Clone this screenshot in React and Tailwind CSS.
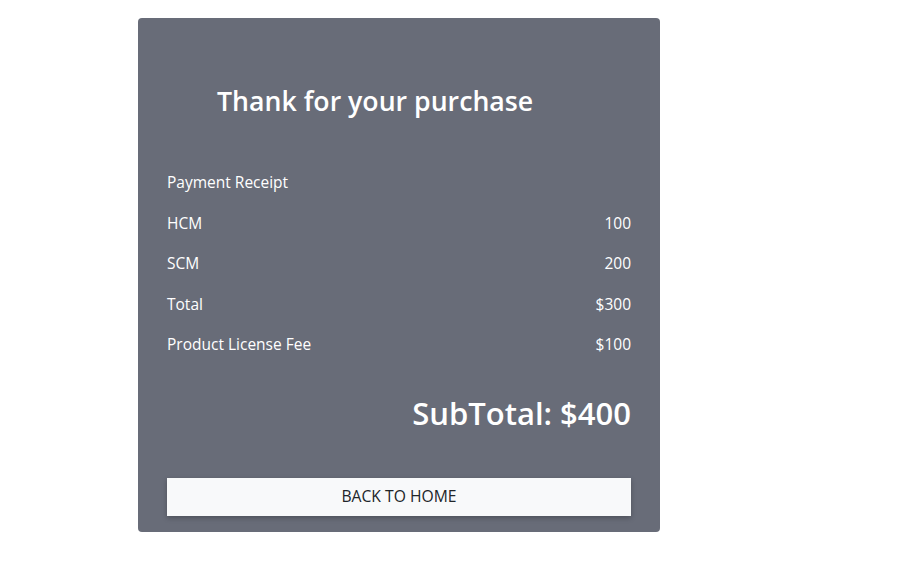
export default function App() {
  const rows = [
    ["HCM", "100"],
    ["SCM", "200"],
    ["Total", "$300"],
    ["Product License Fee", "$100"],
  ];
  return (
    <div className="min-h-[570px] bg-white pl-[138px] pt-[18px]" style={{ fontFamily: '"Open Sans", "Noto Sans", sans-serif' }}>
      <div className="w-[522px] h-[514px] rounded-[4px] bg-[#686c78] px-[29px] text-white">
        <div className="pt-[65px] pl-[50px] h-[101px] text-[26.7px] leading-[36px] font-semibold whitespace-nowrap">
          Thank for your purchase
        </div>
        <div className="mt-[43.75px]">
          <div className="h-[40.5px] flex items-center text-[15.5px]">Payment Receipt</div>
          {rows.map(([k, v]) => (
            <div key={k} className="h-[40.5px] flex items-center justify-between text-[15.5px]">
              <span>{k}</span>
              <span>{v}</span>
            </div>
          ))}
        </div>
        <div className="mt-[26.25px] h-[44px] flex items-center justify-end text-[31px] font-semibold">
          SubTotal: $400
        </div>
        <button className="mt-[42px] w-full h-[38px] bg-[#f8f9fa] text-[#212529] text-[15.7px] shadow-[0_2px_5px_rgba(0,0,0,0.25)] flex items-center justify-center">
          BACK TO HOME
        </button>
      </div>
    </div>
  );
}
